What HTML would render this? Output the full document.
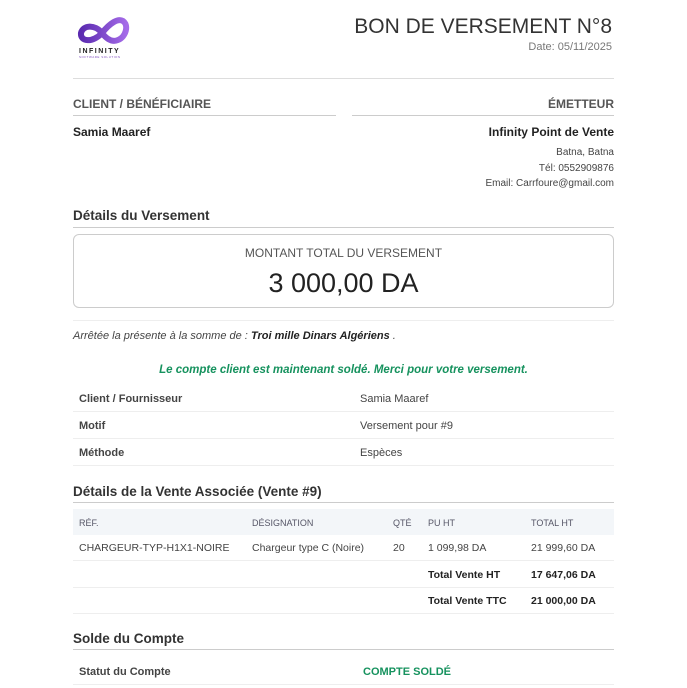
<!DOCTYPE html>
<html><head><meta charset="utf-8"><style>
*{margin:0;padding:0;box-sizing:border-box}
body{width:687px;height:688px;background:#fff;position:relative;overflow:hidden;font-family:"Liberation Sans",sans-serif;color:#333}
.a{position:absolute;white-space:nowrap;line-height:16px}
.l{position:absolute;height:1px;background:#e2e2e2}
.b{font-weight:bold}
</style></head><body>
<svg class="a" style="left:76px;top:17px" width="54" height="30" viewBox="0 0 54 30">
<defs><linearGradient id="g" x1="0" x2="1"><stop offset="0" stop-color="#5b2bb0"/><stop offset="1" stop-color="#a46be8"/></linearGradient></defs>
<path d="M26 16 C19 7 7 8 5 16 C4 25 17 26 26 16 C34 6 42 1 47 4 C53 8 50 20 42 23 C35 26 29 20 26 16" fill="none" stroke="url(#g)" stroke-width="6"/>
</svg>
<div class="a b" style="left:79px;top:47px;font-size:7px;line-height:9px;letter-spacing:1.5px;color:#222">INFINITY</div>
<div class="a" style="left:79px;top:55px;font-size:3px;line-height:4px;color:#8050c0;letter-spacing:.5px">SOFTWARE SOLUTION</div>
<div class="a" style="right:75px;top:14px;font-size:21px;line-height:26px;color:#333">BON DE VERSEMENT N°8</div>
<div class="a" style="right:75px;top:39px;font-size:11px;color:#777">Date: 05/11/2025</div>
<div class="l" style="left:73px;width:541px;top:78px;background:#ddd"></div>
<div class="a b" style="left:73px;top:96px;font-size:12px;color:#555">CLIENT / BÉNÉFICIAIRE</div>
<div class="a b" style="right:73px;top:96px;font-size:12px;color:#555">ÉMETTEUR</div>
<div class="l" style="left:73px;width:263px;top:115px;background:#ccc"></div>
<div class="l" style="left:352px;width:262px;top:115px;background:#ccc"></div>
<div class="a b" style="left:73px;top:124px;font-size:12px;color:#222">Samia Maaref</div>
<div class="a b" style="right:73px;top:124px;font-size:12px;color:#222">Infinity Point de Vente</div>
<div class="a" style="right:73px;top:145px;font-size:10px;color:#444">Batna, Batna</div>
<div class="a" style="right:73px;top:161px;font-size:10px;color:#444">Tél: 0552909876</div>
<div class="a" style="right:73px;top:176px;font-size:10px;color:#444">Email: Carrfoure@gmail.com</div>
<div class="a b" style="left:73px;top:208px;font-size:13.5px;color:#333">Détails du Versement</div>
<div class="l" style="left:73px;width:541px;top:227px;background:#ccc"></div>
<div style="position:absolute;left:73px;top:234px;width:541px;height:74px;border:1px solid #ccc;border-radius:6px"></div>
<div class="a" style="left:73px;width:541px;text-align:center;top:245px;font-size:12px;color:#555">MONTANT TOTAL DU VERSEMENT</div>
<div class="a" style="left:73px;width:541px;text-align:center;top:267px;font-size:27px;line-height:32px;color:#222">3 000,00 DA</div>
<div class="l" style="left:73px;width:541px;top:320px;background:#eee"></div>
<div class="a" style="left:73px;top:328px;font-size:11px;font-style:italic;color:#444">Arrêtée la présente à la somme de : <b style="color:#222">Troi mille Dinars Algériens</b> .</div>
<div class="a b" style="left:73px;width:541px;text-align:center;top:362px;font-size:11.5px;font-style:italic;color:#16925e">Le compte client est maintenant soldé. Merci pour votre versement.</div>
<div class="a b" style="left:79px;top:391px;font-size:11px;color:#444">Client / Fournisseur</div><div class="a" style="left:360px;top:391px;font-size:11px;color:#444">Samia Maaref</div>
<div class="l" style="left:73px;width:541px;top:411px;background:#eee"></div>
<div class="a b" style="left:79px;top:418px;font-size:11px;color:#444">Motif</div><div class="a" style="left:360px;top:418px;font-size:11px;color:#444">Versement pour #9</div>
<div class="l" style="left:73px;width:541px;top:438px;background:#eee"></div>
<div class="a b" style="left:79px;top:445px;font-size:11px;color:#444">Méthode</div><div class="a" style="left:360px;top:445px;font-size:11px;color:#444">Espèces</div>
<div class="l" style="left:73px;width:541px;top:465px;background:#eee"></div>
<div class="a b" style="left:73px;top:484px;font-size:13.5px;color:#333">Détails de la Vente Associée (Vente #9)</div>
<div class="l" style="left:73px;width:541px;top:502px;background:#ccc"></div>
<div style="position:absolute;left:73px;top:509px;width:541px;height:26px;background:#f3f6f9"></div>
<div class="a" style="left:79px;top:515px;font-size:9px;color:#556">RÉF.</div>
<div class="a" style="left:252px;top:515px;font-size:9px;color:#556">DÉSIGNATION</div>
<div class="a" style="left:393px;top:515px;font-size:9px;color:#556">QTÉ</div>
<div class="a" style="left:428px;top:515px;font-size:9px;color:#556">PU HT</div>
<div class="a" style="left:531px;top:515px;font-size:9px;color:#556">TOTAL HT</div>
<div class="a" style="left:79px;top:540px;font-size:10.5px;color:#444">CHARGEUR-TYP-H1X1-NOIRE</div>
<div class="a" style="left:252px;top:540px;font-size:10.5px;color:#444">Chargeur type C (Noire)</div>
<div class="a" style="left:393px;top:540px;font-size:10.5px;color:#444">20</div>
<div class="a" style="left:428px;top:540px;font-size:10.5px;color:#444">1 099,98 DA</div>
<div class="a" style="left:531px;top:540px;font-size:10.5px;color:#444">21 999,60 DA</div>
<div class="l" style="left:73px;width:541px;top:560px;background:#eee"></div>
<div class="a b" style="left:428px;top:567px;font-size:10.5px;color:#222">Total Vente HT</div>
<div class="a b" style="left:531px;top:567px;font-size:10.5px;color:#222">17 647,06 DA</div>
<div class="l" style="left:73px;width:541px;top:587px;background:#eee"></div>
<div class="a b" style="left:428px;top:593px;font-size:10.5px;color:#222">Total Vente TTC</div>
<div class="a b" style="left:531px;top:593px;font-size:10.5px;color:#222">21 000,00 DA</div>
<div class="l" style="left:73px;width:541px;top:613px;background:#eee"></div>
<div class="a b" style="left:73px;top:631px;font-size:13.5px;color:#333">Solde du Compte</div>
<div class="l" style="left:73px;width:541px;top:649px;background:#ccc"></div>
<div class="a b" style="left:79px;top:664px;font-size:11px;color:#444">Statut du Compte</div>
<div class="a b" style="left:363px;top:664px;font-size:11px;color:#16925e">COMPTE SOLDÉ</div>
<div class="l" style="left:73px;width:541px;top:684px;background:#eee"></div>
</body></html>
